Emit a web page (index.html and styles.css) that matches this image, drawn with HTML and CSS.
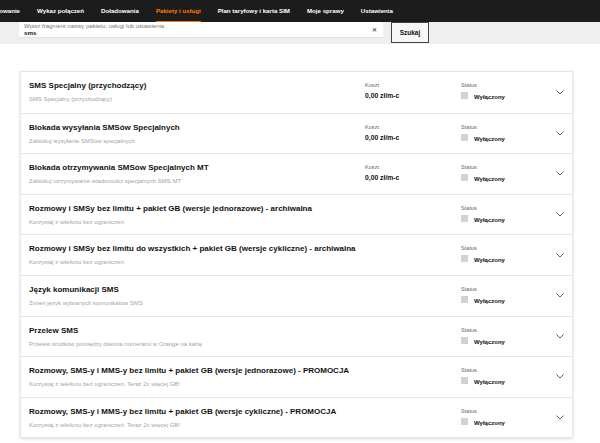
FILE: index.html
```html
<!DOCTYPE html>
<html lang="pl">
<head>
<meta charset="utf-8">
<title>Pakiety i usługi</title>
<link rel="stylesheet" href="styles.css">
</head>
<body>
<nav class="topnav">
  <ul class="menu">
    <li class="menu-item">Podsumowanie</li>
    <li class="menu-item">Wykaz połączeń</li>
    <li class="menu-item">Doładowania</li>
    <li class="menu-item active">Pakiety i usługi</li>
    <li class="menu-item">Plan taryfowy i karta SIM</li>
    <li class="menu-item">Moje sprawy</li>
    <li class="menu-item">Ustawienia</li>
  </ul>
</nav>
<div class="searchbar">
  <div class="search-field">
    <div class="search-text">
      <span class="search-label">Wpisz fragment nazwy pakietu, usługi lub ustawienia</span>
      <span class="search-value">sms</span>
    </div>
    <span class="search-clear">✕</span>
  </div>
  <button class="search-btn">Szukaj</button>
</div>
<main class="content">
  <section class="card">
    <div class="row">
      <div class="info"><div class="title">SMS Specjalny (przychodzący)</div><div class="desc">SMS Specjalny (przychodzący)</div></div>
      <div class="cost"><div class="label">Koszt</div><div class="value">0,00 zł/m-c</div></div>
      <div class="status"><div class="label">Status</div><div class="state"><span class="box"></span><span class="value">Wyłączony</span></div></div>
      <svg class="chev" viewBox="0 0 8 5"><path d="M0.5 0.5 L4 4 L7.5 0.5" /></svg>
    </div>
    <div class="row">
      <div class="info"><div class="title">Blokada wysyłania SMSów Specjalnych</div><div class="desc">Zablokuj wysyłanie SMSów specjalnych</div></div>
      <div class="cost"><div class="label">Koszt</div><div class="value">0,00 zł/m-c</div></div>
      <div class="status"><div class="label">Status</div><div class="state"><span class="box"></span><span class="value">Wyłączony</span></div></div>
      <svg class="chev" viewBox="0 0 8 5"><path d="M0.5 0.5 L4 4 L7.5 0.5" /></svg>
    </div>
    <div class="row">
      <div class="info"><div class="title">Blokada otrzymywania SMSów Specjalnych MT</div><div class="desc">Zablokuj otrzymywanie wiadomości specjalnych SMS MT</div></div>
      <div class="cost"><div class="label">Koszt</div><div class="value">0,00 zł/m-c</div></div>
      <div class="status"><div class="label">Status</div><div class="state"><span class="box"></span><span class="value">Wyłączony</span></div></div>
      <svg class="chev" viewBox="0 0 8 5"><path d="M0.5 0.5 L4 4 L7.5 0.5" /></svg>
    </div>
    <div class="row">
      <div class="info wide"><div class="title">Rozmowy i SMSy bez limitu + pakiet GB (wersje jednorazowe) - archiwalna</div><div class="desc">Korzystaj z telefonu bez ograniczeń.</div></div>
      <div class="status"><div class="label">Status</div><div class="state"><span class="box"></span><span class="value">Wyłączony</span></div></div>
      <svg class="chev" viewBox="0 0 8 5"><path d="M0.5 0.5 L4 4 L7.5 0.5" /></svg>
    </div>
    <div class="row">
      <div class="info wide"><div class="title">Rozmowy i SMSy bez limitu do wszystkich + pakiet GB (wersje cykliczne) - archiwalna</div><div class="desc">Korzystaj z telefonu bez ograniczeń.</div></div>
      <div class="status"><div class="label">Status</div><div class="state"><span class="box"></span><span class="value">Wyłączony</span></div></div>
      <svg class="chev" viewBox="0 0 8 5"><path d="M0.5 0.5 L4 4 L7.5 0.5" /></svg>
    </div>
    <div class="row">
      <div class="info wide"><div class="title">Język komunikacji SMS</div><div class="desc">Zmień język wybranych komunikatów SMS</div></div>
      <div class="status"><div class="label">Status</div><div class="state"><span class="box"></span><span class="value">Wyłączony</span></div></div>
      <svg class="chev" viewBox="0 0 8 5"><path d="M0.5 0.5 L4 4 L7.5 0.5" /></svg>
    </div>
    <div class="row">
      <div class="info wide"><div class="title">Przelew SMS</div><div class="desc">Przelew środków pomiędzy dwoma numerami w Orange na kartę</div></div>
      <div class="status"><div class="label">Status</div><div class="state"><span class="box"></span><span class="value">Wyłączony</span></div></div>
      <svg class="chev" viewBox="0 0 8 5"><path d="M0.5 0.5 L4 4 L7.5 0.5" /></svg>
    </div>
    <div class="row">
      <div class="info wide"><div class="title">Rozmowy, SMS-y i MMS-y bez limitu + pakiet GB (wersje jednorazowe) - PROMOCJA</div><div class="desc">Korzystaj z telefonu bez ograniczeń. Teraz 2x więcej GB!</div></div>
      <div class="status"><div class="label">Status</div><div class="state"><span class="box"></span><span class="value">Wyłączony</span></div></div>
      <svg class="chev" viewBox="0 0 8 5"><path d="M0.5 0.5 L4 4 L7.5 0.5" /></svg>
    </div>
    <div class="row">
      <div class="info wide"><div class="title">Rozmowy, SMS-y i MMS-y bez limitu + pakiet GB (wersje cykliczne) - PROMOCJA</div><div class="desc">Korzystaj z telefonu bez ograniczeń. Teraz 2x więcej GB!</div></div>
      <div class="status"><div class="label">Status</div><div class="state"><span class="box"></span><span class="value">Wyłączony</span></div></div>
      <svg class="chev" viewBox="0 0 8 5"><path d="M0.5 0.5 L4 4 L7.5 0.5" /></svg>
    </div>
  </section>
</main>
</body>
</html>
```

FILE: styles.css
```css
* { box-sizing: border-box; }
html, body { margin: 0; padding: 0; background: #fff; }
body {
  font-family: "Liberation Sans", Arial, sans-serif;
  color: #000;
  width: 600px;
  height: 443px;
  overflow: hidden;
}

.topnav {
  background: #1c1c1c;
  height: 22px;
  overflow: hidden;
}
.menu {
  list-style: none;
  margin: 0 0 0 -25px;
  padding: 0;
  display: flex;
  gap: 17px;
  height: 22px;
  white-space: nowrap;
}
.menu-item {
  color: #fff;
  font-weight: bold;
  font-size: 6.15px;
  line-height: 21px;
  height: 22px;
  border-bottom: 1px solid transparent;
}
.menu-item.active {
  color: #ff7900;
  border-bottom-color: #ff7900;
}

.searchbar {
  background: #efefef;
  height: 22px;
  display: flex;
  align-items: flex-start;
  padding-left: 19px;
}
.search-field {
  width: 364px;
  height: 16px;
  background: #fff;
  border-bottom: 1px solid #e2e2e2;
  display: flex;
  align-items: center;
  padding: 0 6px 0 5px;
}
.search-text {
  flex: 1;
  display: flex;
  flex-direction: column;
}
.search-label {
  font-size: 6px;
  line-height: 6px;
  color: #777;
}
.search-value {
  font-size: 6.2px;
  line-height: 8px;
  font-weight: bold;
  color: #111;
}
.search-clear {
  font-size: 6px;
  font-weight: bold;
  color: #555;
}
.search-btn {
  margin: 0 0 0 8px;
  width: 38px;
  height: 21px;
  border: 1px solid #444;
  background: #f7f7f7;
  font-family: inherit;
  font-size: 6.5px;
  font-weight: bold;
  color: #111;
  padding: 0;
}

.content {
  padding: 27px 27px 0 20px;
}
.card {
  background: #fff;
  border: 1px solid #e6e6e6;
  box-shadow: 0 1px 3px rgba(0,0,0,0.14);
}
.row {
  height: 40.6px;
  display: grid;
  grid-template-columns: 1fr 96px 92px 11px;
  padding: 0 8px 0 8px;
  border-top: 1px solid #e6e6e6;
  align-items: start;
}
.row:first-child { border-top: none; }
.info { padding-top: 9px; grid-column: 1; }
.info.wide { grid-column: 1 / 3; }
.title {
  font-size: 8px;
  line-height: 10px;
  font-weight: bold;
  color: #111;
  white-space: nowrap;
}
.desc {
  margin-top: 4px;
  font-size: 6px;
  line-height: 9px;
  color: #a3a3a3;
  white-space: nowrap;
}
.cost, .status { padding-top: 9px; }
.status { grid-column: 3; }
.label {
  font-size: 5.6px;
  line-height: 8px;
  color: #666;
}
.cost .value {
  margin-top: 3px;
  font-size: 6.8px;
  line-height: 8px;
  font-weight: bold;
  color: #111;
}
.state {
  display: flex;
  align-items: flex-start;
  gap: 6px;
  margin-top: 3px;
}
.box {
  width: 7px;
  height: 7px;
  background: #d2d2d2;
}
.state .value {
  margin-top: 1px;
  font-size: 6px;
  line-height: 8px;
  font-weight: bold;
  color: #111;
}
.chev {
  grid-column: 4;
  align-self: center;
  width: 8px;
  height: 5px;
  margin-left: 3px;
  fill: none;
  stroke: #333;
  stroke-width: 0.8;
}
```
